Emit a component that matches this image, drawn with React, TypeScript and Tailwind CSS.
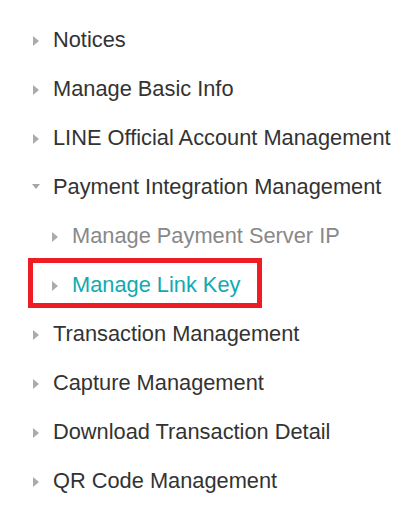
const items = [
  { label: 'Notices' },
  { label: 'Manage Basic Info' },
  { label: 'LINE Official Account Management' },
  {
    label: 'Payment Integration Management',
    open: true,
    children: [
      { label: 'Manage Payment Server IP', active: false },
      { label: 'Manage Link Key', active: true },
    ],
  },
  { label: 'Transaction Management' },
  { label: 'Capture Management' },
  { label: 'Download Transaction Detail' },
  { label: 'QR Code Management' },
];

function Caret({ open }: { open?: boolean }) {
  if (open) {
    return (
      <svg width="8" height="10" viewBox="0 0 8 10" className="-ml-[1px] -mr-[1px] -mt-[4px] shrink-0 fill-[#a6a6a6]">
        <path d="M0 3 L8 3 L4 8 Z" />
      </svg>
    );
  }
  return (
    <svg width="6" height="10" viewBox="0 0 6 10" className="shrink-0 fill-[#ababab]">
      <path d="M0 0 L6 5 L0 10 Z" />
    </svg>
  );
}

export default function App() {
  return (
    <div className="min-h-[526px] w-[420px] bg-white pt-[16px] font-['Liberation_Sans',Arial,sans-serif] text-[21.8px]">
      <ul className="pl-[33px]">
        {items.map((item) => (
          <li key={item.label}>
            <div className="flex h-[49px] items-center gap-[14px] whitespace-nowrap text-[#333333]">
              <Caret open={item.open} />
              <span>{item.label}</span>
            </div>
            {item.children && (
              <ul className="pl-[19px]">
                {item.children.map((child) => (
                  <li key={child.label} className="relative">
                    <div
                      className={
                        child.active
                          ? 'flex h-[49px] items-center gap-[14px] whitespace-nowrap text-[#0fabb0]'
                          : 'flex h-[49px] items-center gap-[14px] whitespace-nowrap text-[#888888]'
                      }
                    >
                      <Caret />
                      <span>{child.label}</span>
                    </div>
                    {child.active && (
                      <span className="pointer-events-none absolute -top-[3px] left-[-24px] h-[50px] w-[234px] border-[5px] border-[#ee1c25]" />
                    )}
                  </li>
                ))}
              </ul>
            )}
          </li>
        ))}
      </ul>
    </div>
  );
}
